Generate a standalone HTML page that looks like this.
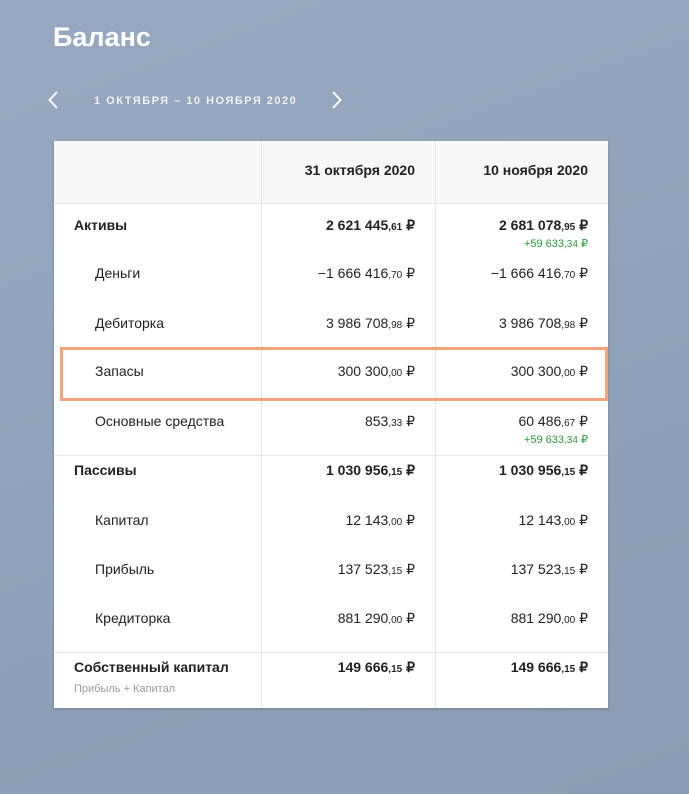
<!DOCTYPE html>
<html><head><meta charset="utf-8"><style>
*{margin:0;padding:0;box-sizing:border-box}
body{width:689px;height:794px;overflow:hidden;background:linear-gradient(160deg,#97a9c0 0%,#8fa1b8 60%,#8b9db4 100%);font-family:"Liberation Sans",sans-serif;position:relative;color:#222}
.a{position:absolute;white-space:nowrap;font-size:14px;line-height:18px}
.r{text-align:right}
.b{font-weight:bold}
small{font-size:10px}
.g{color:#2a9a3a;font-size:11px}
.h{position:absolute;left:0;width:554px;height:1px;background:#e6e6e6}
</style></head><body>
<div class="a b" style="left:53px;top:20px;font-size:27px;line-height:34px;color:#fff">Баланс</div>
<svg style="position:absolute;left:46px;top:90px" width="14" height="20"><path d="M11 2L3.5 10 11 18" stroke="#fff" stroke-width="2" fill="none"/></svg>
<div class="a b" style="left:94px;top:92px;font-size:11px;letter-spacing:1.5px;color:#eef2f7">1 ОКТЯБРЯ – 10 НОЯБРЯ 2020</div>
<svg style="position:absolute;left:330px;top:90px" width="14" height="20"><path d="M3 2l7.5 8L3 18" stroke="#fff" stroke-width="2" fill="none"/></svg>

<div style="position:absolute;left:54px;top:141px;width:554px;height:567px;background:#fff;box-shadow:0 1px 3px rgba(0,0,0,.2)">
<div style="position:absolute;left:0;top:0;width:554px;height:62px;background:#f7f7f7"></div>
<div style="position:absolute;left:207px;top:0;width:1px;height:567px;background:#e6e6e6"></div>
<div style="position:absolute;left:381px;top:0;width:1px;height:567px;background:#e6e6e6"></div>
<div class="h" style="top:62px"></div>
<div class="h" style="top:314px"></div>
<div class="h" style="top:511px"></div>
</div>
<div style="position:absolute;left:60px;top:347px;width:548px;height:54px;border:3px solid #f3a27e"></div>

<div class="a b r" style="left:262px;width:153px;top:161px">31 октября 2020</div>
<div class="a b r" style="left:436px;width:152px;top:161px">10 ноября 2020</div>

<div class="a b" style="left:74px;top:216px">Активы</div>
<div class="a b r" style="left:262px;width:153px;top:216px">2 621 445<small>,61</small> ₽</div>
<div class="a b r" style="left:436px;width:152px;top:216px">2 681 078<small>,95</small> ₽</div>
<div class="a r g" style="left:436px;width:152px;top:235px">+59 633<small>,34</small> ₽</div>

<div class="a" style="left:95px;top:264px">Деньги</div>
<div class="a r" style="left:262px;width:153px;top:264px">−1 666 416<small>,70</small> ₽</div>
<div class="a r" style="left:436px;width:152px;top:264px">−1 666 416<small>,70</small> ₽</div>

<div class="a" style="left:95px;top:314px">Дебиторка</div>
<div class="a r" style="left:262px;width:153px;top:314px">3 986 708<small>,98</small> ₽</div>
<div class="a r" style="left:436px;width:152px;top:314px">3 986 708<small>,98</small> ₽</div>

<div class="a" style="left:95px;top:362px">Запасы</div>
<div class="a r" style="left:262px;width:153px;top:362px">300 300<small>,00</small> ₽</div>
<div class="a r" style="left:436px;width:152px;top:362px">300 300<small>,00</small> ₽</div>

<div class="a" style="left:95px;top:412px">Основные средства</div>
<div class="a r" style="left:262px;width:153px;top:412px">853<small>,33</small> ₽</div>
<div class="a r" style="left:436px;width:152px;top:412px">60 486<small>,67</small> ₽</div>
<div class="a r g" style="left:436px;width:152px;top:431px">+59 633<small>,34</small> ₽</div>

<div class="a b" style="left:74px;top:461px">Пассивы</div>
<div class="a b r" style="left:262px;width:153px;top:461px">1 030 956<small>,15</small> ₽</div>
<div class="a b r" style="left:436px;width:152px;top:461px">1 030 956<small>,15</small> ₽</div>

<div class="a" style="left:95px;top:511px">Капитал</div>
<div class="a r" style="left:262px;width:153px;top:511px">12 143<small>,00</small> ₽</div>
<div class="a r" style="left:436px;width:152px;top:511px">12 143<small>,00</small> ₽</div>

<div class="a" style="left:95px;top:560px">Прибыль</div>
<div class="a r" style="left:262px;width:153px;top:560px">137 523<small>,15</small> ₽</div>
<div class="a r" style="left:436px;width:152px;top:560px">137 523<small>,15</small> ₽</div>

<div class="a" style="left:95px;top:609px">Кредиторка</div>
<div class="a r" style="left:262px;width:153px;top:609px">881 290<small>,00</small> ₽</div>
<div class="a r" style="left:436px;width:152px;top:609px">881 290<small>,00</small> ₽</div>

<div class="a b" style="left:74px;top:658px">Собственный капитал</div>
<div class="a" style="left:74px;top:680px;font-size:11px;color:#999">Прибыль + Капитал</div>
<div class="a b r" style="left:262px;width:153px;top:658px">149 666<small>,15</small> ₽</div>
<div class="a b r" style="left:436px;width:152px;top:658px">149 666<small>,15</small> ₽</div>
</body></html>
